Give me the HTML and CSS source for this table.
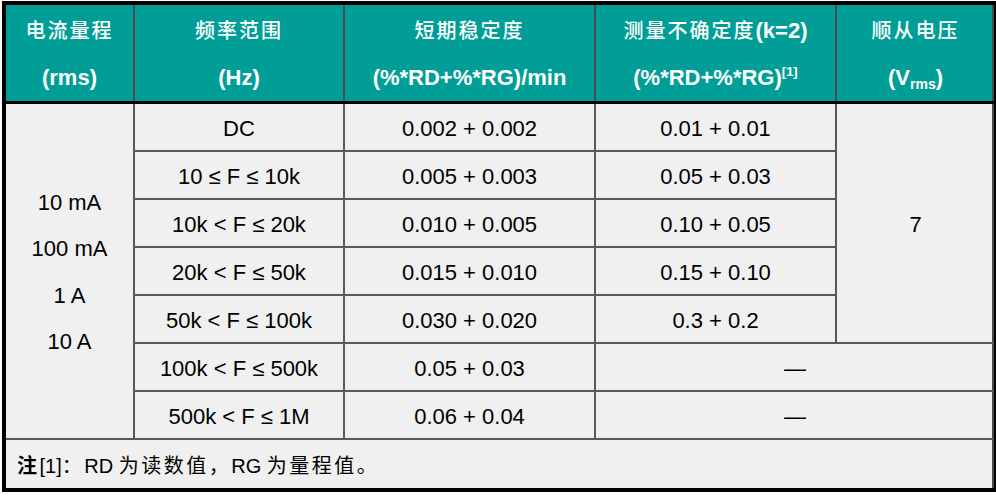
FILE: index.html
```html
<!DOCTYPE html>
<html lang="zh-CN">
<head>
<meta charset="utf-8">
<title>电流量程</title>
<link rel="stylesheet" href="styles.css">
</head>
<body>
<table class="spec">
  <colgroup>
    <col class="c1"><col class="c2"><col class="c3"><col class="c4"><col class="c5">
  </colgroup>
  <thead>
    <tr>
      <th><span class="zh">电流量程</span><br>(rms)</th>
      <th><span class="zh">频率范围</span><br>(Hz)</th>
      <th><span class="zh">短期稳定度</span><br>(%*RD+%*RG)/min</th>
      <th><span class="zh">测量不确定度</span>(k=2)<br>(%*RD+%*RG)<sup>[1]</sup></th>
      <th class="edge"><span class="zh">顺从电压</span><br>(V<sub>rms</sub>)</th>
    </tr>
  </thead>
  <tbody>
    <tr>
      <td rowspan="7" class="ranges">10 mA<br>100 mA<br>1 A<br>10 A</td>
      <td>DC</td><td>0.002 + 0.002</td><td>0.01 + 0.01</td>
      <td rowspan="5" class="edge">7</td>
    </tr>
    <tr><td>10 ≤ F ≤ 10k</td><td>0.005 + 0.003</td><td>0.05 + 0.03</td></tr>
    <tr><td>10k &lt; F ≤ 20k</td><td>0.010 + 0.005</td><td>0.10 + 0.05</td></tr>
    <tr><td>20k &lt; F ≤ 50k</td><td>0.015 + 0.010</td><td>0.15 + 0.10</td></tr>
    <tr><td>50k &lt; F ≤ 100k</td><td>0.030 + 0.020</td><td>0.3 + 0.2</td></tr>
    <tr><td>100k &lt; F ≤ 500k</td><td>0.05 + 0.03</td><td colspan="2" class="edge">—</td></tr>
    <tr><td>500k &lt; F ≤ 1M</td><td>0.06 + 0.04</td><td colspan="2" class="edge">—</td></tr>
    <tr class="note-row">
      <td colspan="5" class="note edge"><span class="zh note-b">注</span>[1]<span class="zh">：</span>RD <span class="zh">为读数值，</span>RG <span class="zh">为量程值。</span></td>
    </tr>
  </tbody>
</table>
</body>
</html>
```

FILE: styles.css
```css
html, body {
  margin: 0;
  padding: 0;
  background: #ffffff;
}

body {
  padding: 1px 0 0 2px;
}

.spec {
  border-collapse: collapse;
  table-layout: fixed;
  width: 992px;
  border: 4px solid #000;
  font-family: "Liberation Sans", Arial, "Noto Sans CJK SC", sans-serif;
  color: #000;
  background: #f0f0f0;
}

.c1 { width: 130px; }
.c2 { width: 210px; }
.c3 { width: 251px; }
.c4 { width: 241px; }
.c5 { width: 160px; }

.spec th {
  background: #009e97;
  color: #fff;
  font-weight: 700;
  font-size: 22px;
  line-height: 47px;
  height: 93px;
  padding: 1px 0 0;
  border: 2px solid #4a4a4a;
  border-top: 0;
  border-bottom: 3px solid #000;
  text-align: center;
  vertical-align: middle;
}

.spec th:first-child { border-left: 0; }
.spec th:last-child { border-right: 0; }

.spec .edge {
  box-shadow: inset -2px 0 0 #4a4a4a;
}

.zh {
  font-family: "Noto Sans CJK SC", sans-serif;
}

.spec th .zh {
  font-weight: 500;
  letter-spacing: 2px;
  font-size: 20px;
}

.spec sup {
  font-size: 13px;
  line-height: 0;
  vertical-align: 9px;
}

.spec sub {
  font-size: 14px;
  line-height: 0;
  vertical-align: -4px;
}

.spec td {
  font-size: 22px;
  height: 43px;
  padding: 3px 0 0;
  border: 2px solid #595959;
  text-align: center;
  vertical-align: middle;
}

.spec td.ranges {
  line-height: 46.5px;
}

.note-row td.note {
  text-align: left;
  padding: 1px 0 0 11px;
  font-size: 20px;
  height: 47px;
  border-bottom: 4px solid #000;
}

.note .zh {
  font-size: 20px;
  letter-spacing: 2.5px;
}

.note-b {
  font-weight: 700;
}
```
